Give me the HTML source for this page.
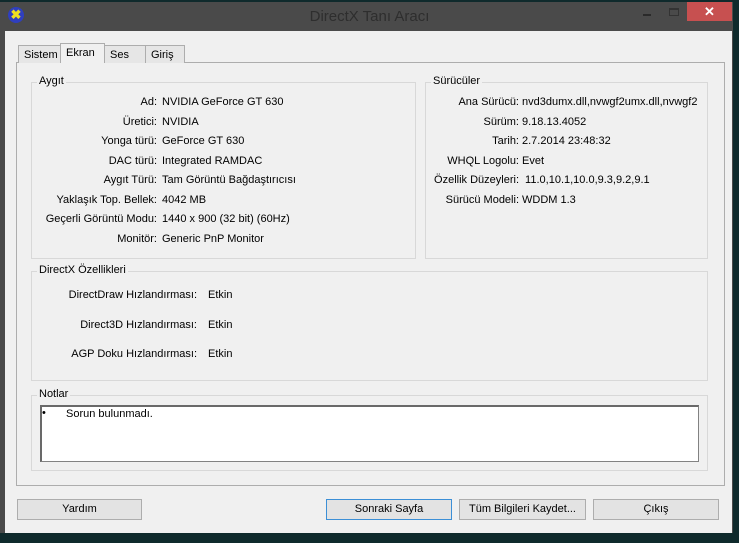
<!DOCTYPE html>
<html><head><meta charset="utf-8"><style>
*{margin:0;padding:0;box-sizing:border-box}
body{width:739px;height:543px;overflow:hidden;background:#0f2a2c;font-family:"Liberation Sans",sans-serif;font-size:11px;color:#000;position:relative}
.a{position:absolute}
.win{left:0;top:2px;width:733px;height:531px;background:#4a4a4a}
.client{left:5px;top:31px;width:727px;height:502px;background:#f0f0f0}
.panel{left:16px;top:62px;width:709px;height:424px;border:1px solid #adadad;background:#f0f0f0}
.tab{top:45px;height:18px;border:1px solid #adadad;border-bottom:none;background:#e6e6e6;padding:3px 0 0 5px;font-size:11px}
.sel{background:#f0f0f0;top:43px;height:20px;z-index:2;padding-top:3px}
.grp{border:1px solid #d8d8d8}
.gl{background:#f0f0f0;padding:0 2px;font-size:11px}
.r{text-align:right}
.btn{top:499px;height:21px;border:1px solid #adadad;background:#e3e3e3;text-align:center;line-height:19px}
</style></head><body>
<div class="a win"></div>
<div class="a" style="left:8px;top:7px;width:16px;height:16px;border-radius:50%;background:#2f3fbf;color:#f0e020;font-weight:bold;font-size:13px;line-height:16px;text-align:center">✖</div>
<div class="a" style="left:0;top:8px;width:739px;text-align:center;font-size:15px;color:#2e2e2e">DirectX Tanı Aracı</div>
<div class="a" style="left:643px;top:14px;width:8px;height:2px;background:#2a2a2a"></div>
<div class="a" style="left:669px;top:8px;width:10px;height:8px;border:1px solid #333;border-top-width:2px"></div>
<div class="a" style="left:687px;top:2px;width:45px;height:19px;background:#c75050;color:#fff;text-align:center;font-size:13px;font-weight:bold;line-height:19px">✕</div>
<div class="a client"></div>
<div class="a panel"></div>
<div class="a tab" style="left:18px;width:43px">Sistem</div>
<div class="a tab sel" style="left:60px;width:45px">Ekran</div>
<div class="a tab" style="left:104px;width:42px">Ses</div>
<div class="a tab" style="left:145px;width:40px">Giriş</div>

<div class="a grp" style="left:31px;top:82px;width:385px;height:177px"></div>
<div class="a gl" style="left:37px;top:75px">Aygıt</div>
<div class="a r" style="left:20px;width:137px;top:93px;line-height:19.5px">Ad:<br>Üretici:<br>Yonga türü:<br>DAC türü:<br>Aygıt Türü:<br>Yaklaşık Top. Bellek:<br>Geçerli Görüntü Modu:<br>Monitör:</div>
<div class="a" style="left:162px;top:93px;line-height:19.5px">NVIDIA GeForce GT 630<br>NVIDIA<br>GeForce GT 630<br>Integrated RAMDAC<br>Tam Görüntü Bağdaştırıcısı<br>4042 MB<br>1440 x 900 (32 bit) (60Hz)<br>Generic PnP Monitor</div>

<div class="a grp" style="left:425px;top:82px;width:283px;height:177px"></div>
<div class="a gl" style="left:431px;top:75px">Sürücüler</div>
<div class="a r" style="left:420px;width:99px;top:93px;line-height:19.5px">Ana Sürücü:<br>Sürüm:<br>Tarih:<br>WHQL Logolu:<br>Özellik Düzeyleri:<br>Sürücü Modeli:</div>
<div class="a" style="left:522px;top:93px;line-height:19.5px;white-space:nowrap">nvd3dumx.dll,nvwgf2umx.dll,nvwgf2<br>9.18.13.4052<br>2.7.2014 23:48:32<br>Evet<br>&nbsp;11.0,10.1,10.0,9.3,9.2,9.1<br>WDDM 1.3</div>

<div class="a grp" style="left:31px;top:271px;width:677px;height:110px"></div>
<div class="a gl" style="left:37px;top:264px">DirectX Özellikleri</div>
<div class="a r" style="left:40px;width:157px;top:289px">DirectDraw Hızlandırması:</div>
<div class="a r" style="left:40px;width:157px;top:319px">Direct3D Hızlandırması:</div>
<div class="a r" style="left:40px;width:157px;top:348px">AGP Doku Hızlandırması:</div>
<div class="a" style="left:208px;top:289px">Etkin</div>
<div class="a" style="left:208px;top:319px">Etkin</div>
<div class="a" style="left:208px;top:348px">Etkin</div>

<div class="a grp" style="left:31px;top:395px;width:677px;height:76px"></div>
<div class="a gl" style="left:37px;top:388px">Notlar</div>
<div class="a" style="left:40px;top:405px;width:659px;height:57px;background:#fff;border:1px solid #828282;border-top:2px solid #696969;border-left:2px solid #696969"></div>
<div class="a" style="left:42px;top:407px">•</div>
<div class="a" style="left:66px;top:408px">Sorun bulunmadı.</div>

<div class="a btn" style="left:17px;width:125px">Yardım</div>
<div class="a btn" style="left:326px;width:126px;border-color:#3c8fd6">Sonraki Sayfa</div>
<div class="a btn" style="left:459px;width:127px">Tüm Bilgileri Kaydet...</div>
<div class="a btn" style="left:593px;width:126px">Çıkış</div>
</body></html>
